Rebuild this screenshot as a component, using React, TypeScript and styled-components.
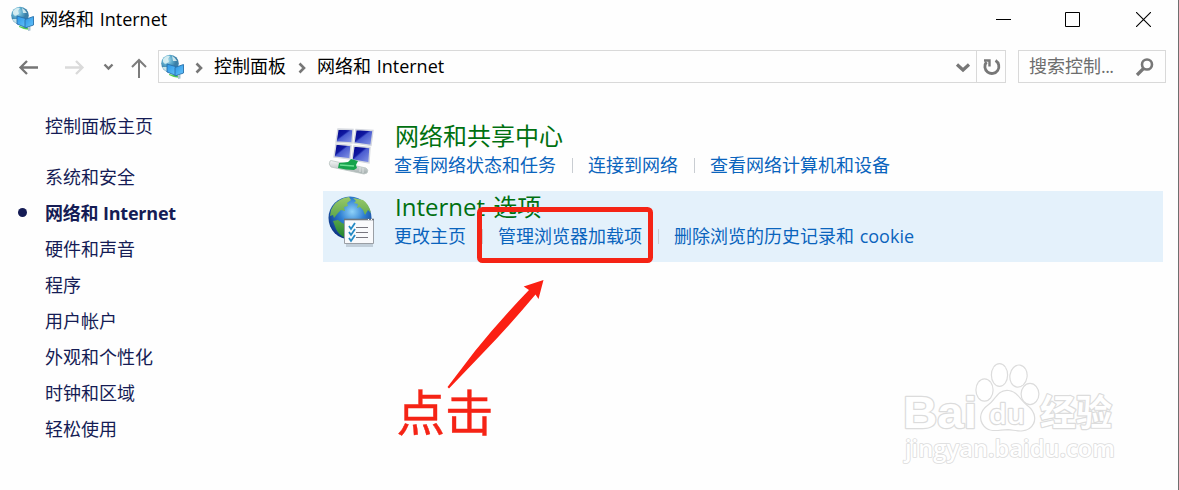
import React from 'react';
import styled, { createGlobalStyle } from 'styled-components';

const GlobalStyle = createGlobalStyle`
  * { box-sizing: border-box; }
  body {
    margin: 0;
    background: #fff;
    font-family: 'Open Sans', 'Noto Sans CJK SC', sans-serif;
    font-size: 18px;
    color: #000;
  }
`;

const Window = styled.div`
  position: relative;
  width: 1179px;
  height: 490px;
  overflow: hidden;
  display: flex;
  flex-direction: column;
  background: #fefefe;
  border-right: 1px solid #6f6f6f;
  white-space: nowrap;
`;

const TitleBar = styled.header`
  display: flex;
  align-items: center;
  height: 38px;
  padding-left: 10px;
`;

const Title = styled.span`
  flex: 1;
  margin-left: 5px;
  line-height: 38px;
  word-spacing: 1px;
`;

const Controls = styled.div`
  display: flex;
  align-items: center;
  padding-right: 27px;
  svg { display: block; }
  svg + svg { margin-left: 54px; }
  svg:last-child { margin-left: 56px; }
`;

const Toolbar = styled.nav`
  display: flex;
  align-items: center;
  height: 33px;
  margin-top: 12px;
  padding-right: 12px;
`;

const NavButtons = styled.div`
  width: 158px;
  height: 33px;
  svg { display: block; }
`;

const AddressBar = styled.div`
  display: flex;
  align-items: center;
  width: 848px;
  height: 33px;
  border: 1px solid #d9d9d9;
  padding-left: 1px;
`;

const Crumb = styled.span`
  line-height: 31px;
  word-spacing: 1px;
`;

const Chevron = styled.svg<{ $left: number; $right: number }>`
  flex: none;
  margin: 2px ${p => p.$right}px 0 ${p => p.$left}px;
`;

const AddressEnd = styled.div`
  display: flex;
  height: 31px;
  margin-left: auto;
  svg { display: block; }
`;

const Refresh = styled.div`
  width: 29px;
  border-left: 1px solid #d9d9d9;
`;

const SearchBox = styled.div`
  display: flex;
  justify-content: space-between;
  width: 148px;
  height: 33px;
  margin-left: 12px;
  padding: 0 10px;
  border: 1px solid #d9d9d9;
  color: #6d6d6d;
  line-height: 31px;
`;

const Ellipsis = styled.span`
  letter-spacing: -0.6px;
`;

const Body = styled.div`
  display: flex;
  flex: 1;
`;

const Sidebar = styled.aside`
  width: 323px;
  padding: 24px 0 0 45px;
`;

const SideLink = styled.div<{ $active?: boolean; $home?: boolean }>`
  display: flex;
  align-items: center;
  height: 36px;
  margin-bottom: ${p => (p.$home ? 15 : 0)}px;
  color: #151c55;
  font-weight: ${p => (p.$active ? 700 : 400)};
  ${p => p.$active && `
    margin-left: -27px;
    letter-spacing: -0.2px;
    &::before {
      content: '';
      width: 9px;
      height: 9px;
      margin-right: 18px;
      border-radius: 50%;
      background: #151c55;
    }
  `}
`;

const Main = styled.main`
  width: 840px;
  padding-top: 37px;
`;

const Category = styled.section<{ $hover?: boolean }>`
  display: flex;
  height: 71px;
  background: ${p => (p.$hover ? '#e4f1fb' : 'transparent')};
`;

const CategoryIcon = styled.svg`
  flex: none;
  width: 56px;
  height: 60px;
  margin: 0 11px 0 4px;
`;

const CategoryTitle = styled.h2`
  height: 30px;
  margin: 1px 0 0 1px;
  color: #007010;
  font-size: 24px;
  font-weight: 400;
  line-height: 30px;
  word-spacing: 2px;
`;

const Links = styled.div`
  display: flex;
  align-items: center;
  height: 28px;
`;

const TaskLink = styled.a`
  color: #0a64bd;
  line-height: 28px;
  word-spacing: 1px;
  & + & { 
    display: flex;
    align-items: center;
  }
  & + &::before {
    content: '';
    width: 1px;
    height: 15px;
    margin: 0 15px 0 16px;
    background: #c9cdd2;
  }
`;

const Overlay = styled.svg`
  position: absolute;
  left: 0;
  top: 0;
  pointer-events: none;
`;

const NetworkIcon = () => (
  <svg width="25" height="26" viewBox="0 0 25 26">
    <defs>
      <radialGradient id="smallGlobe" cx=".35" cy=".3">
        <stop offset="0" stopColor="#b8e2ef" />
        <stop offset=".6" stopColor="#5aa9cb" />
        <stop offset="1" stopColor="#3b7fa8" />
      </radialGradient>
      <linearGradient id="screen" x2="1" y2="1">
        <stop offset="0" stopColor="#2a96e6" />
        <stop offset="1" stopColor="#68c4fb" />
      </linearGradient>
    </defs>
    <circle cx="10" cy="9.500" r="8.800" fill="url(#smallGlobe)" />
    <path d="M3 5Q6 1 10 2L8 5L9 8L5 10L3 8ZM12 2Q16 4 17 7L13 7Z" fill="#dff2f3" opacity=".85" />
    <path d="M2 13Q5 18 10 18L7 13Z" fill="#c6e4ea" />
    <path d="M9 20L19 22L20 24Q14 24 9 21Z" fill="#58cf52" />
    <path d="M7 10L17 13L17 22L7 18Z" fill="url(#screen)" stroke="#2871aa" strokeWidth=".9" />
    <path d="M15 13.500L23.500 10.500V19L15 22Z" fill="url(#screen)" stroke="#2871aa" strokeWidth=".9" />
    <path d="M18 21.500L20.500 20.500V24.500L18 25Z" fill="#a9c4d0" />
  </svg>
);

const SharingIcon = () => (
  <CategoryIcon viewBox="0 0 56 60">
    <defs>
      <linearGradient id="pane" x2=".9" y2="1">
        <stop offset="0" stopColor="#03058c" />
        <stop offset=".42" stopColor="#1018a0" />
        <stop offset=".5" stopColor="#4a5cd0" />
        <stop offset="1" stopColor="#8494e4" />
      </linearGradient>
      <linearGradient id="pipe" x2="0" y2="1">
        <stop offset="0" stopColor="#f4f6f6" />
        <stop offset="1" stopColor="#a3adad" />
      </linearGradient>
    </defs>
    <g fill="url(#pane)" stroke="#d5d8df" strokeWidth="1.4">
      <path d="M11 9L26 9.500L25 23L9 22Z" />
      <path d="M29 9.500L46 10.500L44 25.500L27 23Z" />
      <path d="M9 24L24 25.500L23 39L7 37Z" />
      <path d="M27 26L43 27.500L42 43L25 40Z" />
    </g>
    <path d="M3 41Q4 40 6 41L39 48Q42 50 40 53L37 54L4 47Q1 44 3 41Z" fill="url(#pipe)" stroke="#bac4c2" strokeWidth=".8" />
    <path d="M12 43L21 42L24 39L31 41L29 45L30 48L27 50Q19 50 11 48Z" fill="#17a34c" />
    <path d="M13 45L27 46" stroke="#6ee094" strokeWidth="1.5" />
    <path d="M33 47V52M36 48V53" stroke="#dce2e1" />
  </CategoryIcon>
);

const InternetIcon = () => (
  <CategoryIcon viewBox="0 0 56 60">
    <defs>
      <radialGradient id="globe" cx=".55" cy=".35" r=".65">
        <stop offset="0" stopColor="#8fd2f8" />
        <stop offset=".45" stopColor="#2f7fd2" />
        <stop offset="1" stopColor="#0c3384" />
      </radialGradient>
      <linearGradient id="land" x2="0" y2="1">
        <stop offset="0" stopColor="#9ac96a" />
        <stop offset="1" stopColor="#20852d" />
      </linearGradient>
    </defs>
    <circle cx="23" cy="27" r="21.500" fill="url(#globe)" />
    <path d="M17 7Q8 10 4 19L3 25L6 24L7 27L11 22L14 19L18 20L17 16L21 15L20 12L24 9L22 6ZM26 7L36 9Q42 13 44 22L41 19L38 24L36 19L33 16L30 17L31 13L27 12L29 10ZM6 30L11 29L15 32L20 34L18 38L18 47Q11 43 9 38Z" fill="url(#land)" />
    <path d="M19 35H46V56H19Z" fill="#8d9ba8" opacity=".4" />
    <path d="M17.500 28.500H46.500V52.500H17.500Z" fill="#f9fafc" stroke="#9a9fa5" />
    <path d="M17 28.500H47" stroke="#6d757c" strokeWidth="1.600" />
    <path d="M41 28.500H42M44 28.500H45" stroke="#fff" />
    <path d="M29 36.500H41M29 41.500H41M29 46.500H41" stroke="#77767f" />
    <path d="M22 35L24 38L28 32M22 41L24 44L28 38M22 47L24 50L28 44" fill="none" stroke="#2389c4" strokeWidth="1.8" />
  </CategoryIcon>
);

const Crumbs = ({ left, right }: { left: number; right: number }) => (
  <Chevron $left={left} $right={right} width="8" height="12" viewBox="0 0 8 12">
    <path d="M1.500 1.500L6 6L1.500 10.500" fill="none" stroke="#777" strokeWidth="2.600" />
  </Chevron>
);

const sideItems = ['系统和安全', '网络和 Internet', '硬件和声音', '程序', '用户帐户', '外观和个性化', '时钟和区域', '轻松使用'];

const categories = [
  { title: '网络和共享中心', Icon: SharingIcon, links: ['查看网络状态和任务', '连接到网络', '查看网络计算机和设备'] },
  { title: 'Internet 选项', Icon: InternetIcon, links: ['更改主页', '管理浏览器加载项', '删除浏览的历史记录和 cookie'] },
];

const Annotation = () => (
  <Overlay width="1179" height="490">
    <rect x="479.500" y="209.500" width="171" height="51" rx="3" fill="none" stroke="#f52315" strokeWidth="5" />
    <path d="M543.500 280L523.700 286.500L529 290Q500 320 475 351L447.500 387L449 388.500L482 354Q510 325 535.500 294.500L538.500 299Z" fill="#fb2013" />
    <text x="396.500" y="430.500" fontSize="48.500" fill="#f52315" stroke="#f52315" strokeWidth=".4" fontFamily="'Noto Sans CJK SC', sans-serif">点击</text>
  </Overlay>
);

const Watermark = () => (
  <Overlay width="1179" height="490">
    <g fill="#fff" stroke="#dcdcdc" strokeWidth="2.400" strokeLinejoin="round" style={{ paintOrder: 'stroke' }}>
      <text x="903" y="428" fontSize="44" fontWeight="700" textLength="74" lengthAdjust="spacingAndGlyphs" fontFamily="'Liberation Sans', sans-serif">Bai</text>
      <ellipse cx="984.500" cy="390" rx="8" ry="10.500" />
      <ellipse cx="999.500" cy="375" rx="7.500" ry="10.800" />
      <ellipse cx="1018.500" cy="376" rx="8" ry="10.500" transform="rotate(8 1018 376)" />
      <ellipse cx="1030" cy="394" rx="8.300" ry="10" />
      <path d="M1007 391C998 391 996 400 989 405C979 412 979 422 987 428C993 432 1000 429 1008 429C1017 430 1023 432 1029 428C1037 422 1035 412 1027 406C1019 400 1017 391 1007 391Z" />
      <text x="989" y="424" fontSize="27" fontWeight="600" textLength="36" lengthAdjust="spacingAndGlyphs" fontFamily="'Open Sans', sans-serif">du</text>
      <text x="1040" y="426" fontSize="36" fontWeight="700" fontFamily="'Noto Sans CJK SC', sans-serif">经验</text>
      <text x="905" y="457" fontSize="23" fontWeight="600" strokeWidth="1.600" textLength="210" lengthAdjust="spacingAndGlyphs" fontFamily="'Open Sans', sans-serif">jingyan.baidu.com</text>
    </g>
  </Overlay>
);

export default function App() {
  return (
    <>
      <GlobalStyle />
      <Window>
        <TitleBar>
          <NetworkIcon />
          <Title>网络和 Internet</Title>
          <Controls>
            <svg width="15" height="15"><path d="M0 7.500H15" stroke="#000" /></svg>
            <svg width="15" height="15"><path d="M.5 .5H14.500V14.500H.5Z" fill="none" stroke="#000" /></svg>
            <svg width="15" height="15"><path d="M0 0L15 15M15 0L0 15" stroke="#000" strokeWidth="1.100" /></svg>
          </Controls>
        </TitleBar>
        <Toolbar>
          <NavButtons>
            <svg width="158" height="33" fill="none" strokeWidth="2.300">
              <path d="M38 17.500H21M27 11L20.500 17.500L27 24" stroke="#757575" />
              <path d="M65 17.500H82M76 11L82.500 17.500L76 24" stroke="#dadada" />
              <path d="M104.500 14.500L108.500 18.500L112.500 14.500" stroke="#777" strokeWidth="2.400" />
              <path d="M139 28V10M132 17L139 10L146 17" stroke="#7c7c7c" strokeWidth="2" />
            </svg>
          </NavButtons>
          <AddressBar>
            <NetworkIcon />
            <Crumbs left={10} right={11} />
            <Crumb>控制面板</Crumb>
            <Crumbs left={12} right={11} />
            <Crumb>网络和 Internet</Crumb>
            <AddressEnd>
              <svg width="24" height="31"><path d="M5 13.500L11 19L17 13.500" fill="none" stroke="#777" strokeWidth="3.200" /></svg>
              <Refresh>
                <svg width="28" height="31" fill="none" stroke="#777" strokeWidth="2.800">
                  <path d="M18.500 9.500A7 7 0 1 1 9.500 11" />
                  <path d="M7 9.500H12.500V15.500" strokeWidth="2.400" />
                </svg>
              </Refresh>
            </AddressEnd>
          </AddressBar>
          <SearchBox>
            <span>搜索控制<Ellipsis>...</Ellipsis></span>
            <svg width="20" height="31" fill="none" stroke="#777">
              <circle cx="12" cy="13.500" r="5" strokeWidth="2.600" />
              <path d="M8.500 17.500L2 24" strokeWidth="3.200" />
            </svg>
          </SearchBox>
        </Toolbar>
        <Body>
          <Sidebar>
            <SideLink $home>控制面板主页</SideLink>
            {sideItems.map((item, i) => <SideLink key={item} $active={i === 1}>{item}</SideLink>)}
          </Sidebar>
          <Main>
            {categories.map(({ title, Icon, links }, i) => (
              <Category key={title} $hover={i === 1}>
                <Icon />
                <div>
                  <CategoryTitle>{title}</CategoryTitle>
                  <Links>{links.map(link => <TaskLink key={link}>{link}</TaskLink>)}</Links>
                </div>
              </Category>
            ))}
          </Main>
        </Body>
        <Annotation />
        <Watermark />
      </Window>
    </>
  );
}
